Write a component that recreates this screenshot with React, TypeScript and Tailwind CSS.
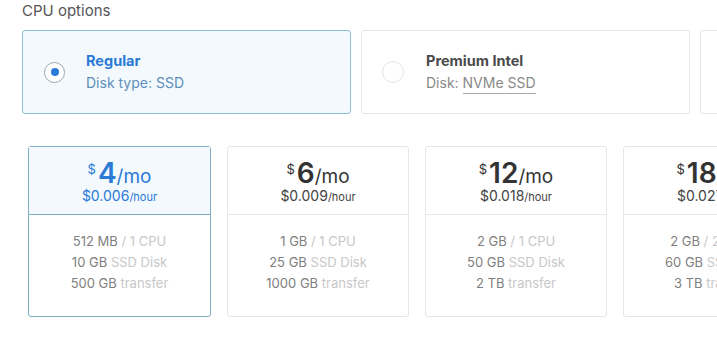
import React from "react";

type Plan = {
  price: string;
  hourly: string;
  mem: string;
  cpu: string;
  disk: string;
  transfer: string;
};

const plans: Plan[] = [
  { price: "4", hourly: "$0.006", mem: "512 MB", cpu: "1 CPU", disk: "10 GB", transfer: "500 GB" },
  { price: "6", hourly: "$0.009", mem: "1 GB", cpu: "1 CPU", disk: "25 GB", transfer: "1000 GB" },
  { price: "12", hourly: "$0.018", mem: "2 GB", cpu: "1 CPU", disk: "50 GB", transfer: "2 TB" },
  { price: "18", hourly: "$0.027", mem: "2 GB", cpu: "2 CPUs", disk: "60 GB", transfer: "3 TB" },
];

function PlanCard({ plan, selected }: { plan: Plan; selected: boolean }) {
  return (
    <div
      className={
        selected
          ? "w-[183px] h-[171px] shrink-0 rounded-[3px] border border-[#7fadc4] bg-white flex flex-col"
          : "w-[182px] h-[171px] shrink-0 rounded-[3px] border border-[#e6e6e6] bg-white flex flex-col"
      }
    >
      <div
        className={
          selected
            ? "h-[68px] border-b border-[#7fadc4] bg-[#f3f9fd] flex flex-col items-center pt-[12px]"
            : "h-[68px] border-b border-[#e8e8e8] flex flex-col items-center pt-[12px]"
        }
      >
        <div className={selected ? "flex items-start text-[#2a7ad6]" : "flex items-start text-[#333]"}>
          <span className="text-[13px] leading-[16px] mt-[2px] mr-[2px]">$</span>
          <span className="text-[28px] leading-[28px] font-semibold">{plan.price}</span>
          <span className="text-[19px] leading-[20px] mt-[8px]">/mo</span>
        </div>
        <div className={selected ? "text-[#2a7ad6] text-[14px] leading-[18px]" : "text-[#444] text-[14px] leading-[18px]"}>
          {plan.hourly}
          <span className="text-[11px]">/hour</span>
        </div>
      </div>
      <div className="flex flex-col items-center pt-[16px] text-[13px] leading-[21px] text-[#808080]">
        <div>
          {plan.mem} <span className="text-[#c8c8c8]">/ {plan.cpu}</span>
        </div>
        <div>
          {plan.disk} <span className="text-[#c8c8c8]">SSD Disk</span>
        </div>
        <div>
          {plan.transfer} <span className="text-[#c8c8c8]">transfer</span>
        </div>
      </div>
    </div>
  );
}

export default function App() {
  return (
    <div
      className="w-[717px] h-[342px] overflow-hidden bg-white"
      style={{ fontFamily: "Inter, 'Open Sans', sans-serif" }}
    >
      <div className="pl-[22px] pt-[1px] text-[15px] leading-[20px] text-[#555]">CPU options</div>

      <div className="flex gap-[10px] pl-[22px] mt-[9px]">
        <div className="w-[329px] h-[84px] shrink-0 rounded-[3px] border border-[#8cbdd6] bg-[#f3f9fd] flex items-center">
          <div className="ml-[21px] w-[21px] h-[21px] rounded-full border border-[#9aa7b2] bg-white flex items-center justify-center">
            <div className="w-[8px] h-[8px] rounded-full bg-[#2a7ad6]" />
          </div>
          <div className="ml-[21px] flex flex-col">
            <span className="text-[14.5px] leading-[22px] font-bold text-[#2a7ad6]">Regular</span>
            <span className="text-[14px] leading-[22px] text-[#5f8fba]">Disk type: SSD</span>
          </div>
        </div>

        <div className="w-[329px] h-[84px] shrink-0 rounded-[3px] border border-[#e6e6e6] bg-white flex items-center">
          <div className="ml-[20px] w-[22px] h-[22px] rounded-full border border-[#e4e4e4] bg-white" />
          <div className="ml-[22px] flex flex-col">
            <span className="text-[14.5px] leading-[22px] font-bold text-[#4a4a4a]">Premium Intel</span>
            <span className="text-[14px] leading-[22px] text-[#8a8a8a]">
              Disk: <span className="border-b border-[#a9a9a9] pb-[2px]">NVMe SSD</span>
            </span>
          </div>
        </div>

        <div className="w-[329px] h-[84px] shrink-0 rounded-[3px] border border-[#e6e6e6] bg-white" />
      </div>

      <div className="flex gap-[16px] pl-[28px] mt-[32px]">
        {plans.map((p, i) => (
          <PlanCard key={p.price} plan={p} selected={i === 0} />
        ))}
      </div>
    </div>
  );
}
